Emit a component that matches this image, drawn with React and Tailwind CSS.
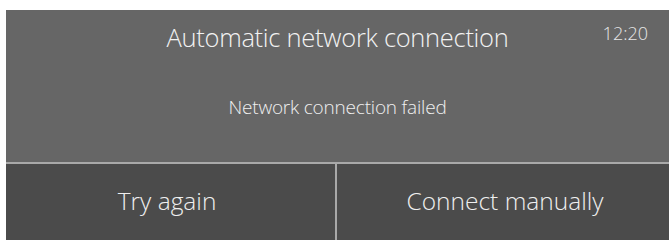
export default function App() {
  return (
    <div className="w-[670px] h-[240px] bg-white pt-[10px] pl-[6px] pr-[1px] overflow-hidden" style={{ fontFamily: '"Open Sans", "Noto Sans", sans-serif' }}>
      <div className="flex flex-col h-[230px]">
        <div className="relative h-[152px] bg-[#666666] flex flex-col items-center">
          <div className="mt-[11px] text-[25.5px] leading-[32px] font-light text-[#f2f2f2] tracking-[-0.3px]">Automatic network connection</div>
          <div className="absolute right-[21px] top-[11px] text-[18px] leading-[24px] font-light text-[#e6e6e6]">12:20</div>
          <div className="mt-[41px] text-[19px] leading-[26px] font-light text-[#f0f0f0] tracking-[-0.2px]">Network connection failed</div>
        </div>
        <div className="h-[2px] bg-[#a9a9a9]" />
        <div className="flex flex-1 bg-[#4b4b4b]">
          <div className="w-[329px] flex items-center justify-center text-[24.5px] font-light text-[#efefef] pb-[1px] pr-[7px]">Try again</div>
          <div className="w-[2px] bg-[#a9a9a9]" />
          <div className="flex-1 flex items-center justify-center text-[24.5px] font-light text-[#efefef] pb-[1px] pl-[4px]">Connect manually</div>
        </div>
      </div>
    </div>
  );
}
